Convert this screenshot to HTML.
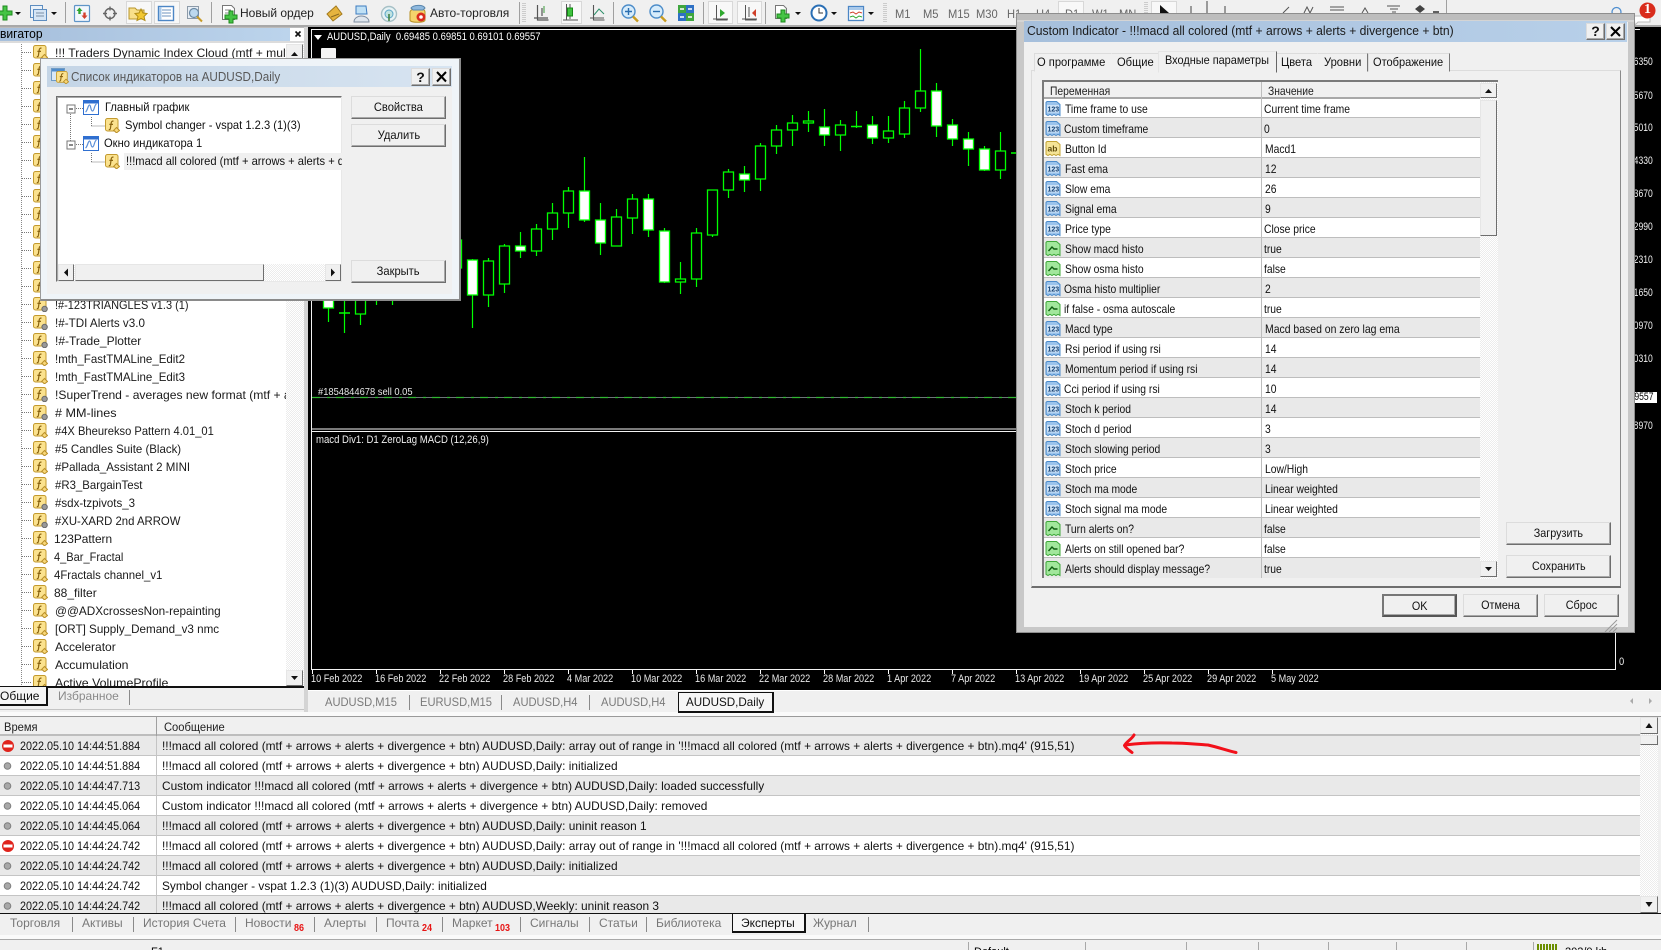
<!DOCTYPE html>
<html lang="ru"><head><meta charset="utf-8"><title>MetaTrader</title>
<style>
html{margin:0;padding:0;width:1661px;height:950px;overflow:hidden}
body{margin:0;padding:0;position:relative;width:1661px;height:950px;overflow:hidden;background:#f0f0f0;font-family:"Liberation Sans","Noto Sans CJK SC",sans-serif;color:#000}
i{position:absolute;font-style:normal;font-size:12px;line-height:14px;white-space:pre;transform-origin:0 0}
.a,svg.a{position:absolute;left:0;top:0}
.r{position:absolute}
.nav i{transform:scaleX(.95);color:#1a1a1a}
.ax i{font-size:11px;color:#f0f0f0;right:8px;transform-origin:100% 0;transform:scaleX(.78)}
.dt i{font-size:11px;color:#e8e8e8;transform:scaleX(.83)}
.ct i{color:#7a7a7a;transform:scaleX(.93)}
.bt i{color:#777}
.lg i{transform:scaleX(.9);color:#111}
.lg i.m{transform:scaleX(.99)}
.tb i{color:#222}
.tf i{color:#666;transform:scaleX(.93)}
.d1 i{transform:scaleX(.93);color:#111}
.d2 i{transform:scaleX(.86);color:#111}
.d2 i.tab{transform:scaleX(.93)}
.btn{position:absolute;box-sizing:border-box;background:#f0f0f0;border:1px solid;border-color:#dcdcdc #6e6e6e #6e6e6e #dcdcdc;box-shadow:inset -1px -1px #a8a8a8;text-align:center;font-size:12px;color:#111;overflow:hidden}
.sb{position:absolute;box-sizing:border-box;background:#f0f0f0;border:1px solid;border-color:#e6e6e6 #6e6e6e #6e6e6e #e6e6e6}
.ha{position:absolute;background:repeating-conic-gradient(#ececec 0 25%,#fff 0 50%) 0 0/2px 2px}
.sep{position:absolute;width:1px;background:#8a8a8a}
</style></head>
<body>
<svg width="0" height="0" style="position:absolute">
<defs>
<symbol id="fy" viewBox="0 0 15 15"><rect x=".5" y=".5" width="12.5" height="12.5" rx="2" fill="#fbe28e" stroke="#c39a2e"/><path d="M8.5 3.2C7 2.8 6.4 3.8 6.2 5L5.4 10.5C5.2 11.5 4.6 11.8 3.8 11.5M4.4 6.4H8" fill="none" stroke="#8a6410" stroke-width="1.2"/><path d="M11.5 9.5l3 3-3 2.4-2.8-2.6z" fill="#f8d778" stroke="#b98f28"/></symbol>
<symbol id="fg" viewBox="0 0 15 15"><rect x=".5" y=".5" width="12.5" height="12.5" rx="2" fill="#fbe28e" stroke="#c39a2e"/><path d="M8.5 3.2C7 2.8 6.4 3.8 6.2 5L5.4 10.5C5.2 11.5 4.6 11.8 3.8 11.5M4.4 6.4H8" fill="none" stroke="#8a6410" stroke-width="1.2"/><circle cx="11.6" cy="12" r="2.7" fill="#9a9a9a" stroke="#6b6b6b"/></symbol>
<symbol id="n" viewBox="0 0 16 17"><path d="M2 1.5h9.500l3.500 3v11l-2-1.200-2 1.200-2-1.200-2 1.200-2-1.200-2 1.200-2-1.200V2.500z" fill="#9cc4ec" stroke="#4d8ccb"/><rect x="2" y="5" width="12" height="7.500" fill="#cfe3f7"/><text x="2.500" y="11.300" font-size="7" font-weight="700" fill="#123f70" font-family="Liberation Sans">123</text></symbol>
<symbol id="ab" viewBox="0 0 16 17"><path d="M2 1.500h9.500l3.500 3v11l-2-1.200-2 1.200-2-1.200-2 1.200-2-1.200-2 1.200-2-1.200V2.500z" fill="#f5e497" stroke="#c3a436"/><text x="2.500" y="11.500" font-size="8.500" font-weight="700" fill="#5e4b0c" font-family="Liberation Sans">ab</text></symbol>
<symbol id="bo" viewBox="0 0 16 17"><path d="M2 1.500h9.500l3.500 3v11l-2-1.200-2 1.200-2-1.200-2 1.200-2-1.200-2 1.200-2-1.200V2.500z" fill="#a2e79c" stroke="#3fa83a"/><path d="M3.500 11l3.500-4 2 2h3.500" fill="none" stroke="#0f5f12" stroke-width="1.400"/></symbol>
<symbol id="ch" viewBox="0 0 16 15"><rect x=".5" y=".5" width="15" height="14" fill="#fff" stroke="#2f6fd0"/><rect x="1" y="1" width="14" height="2.500" fill="#2f6fd0"/><path d="M2.500 12c2-1 2.500-7 4-7s1 6 3 6 1.500-6 4-7" fill="none" stroke="#5b8fd8" stroke-width="1.200"/></symbol>
</defs></svg>

<!-- toolbar -->
<svg class="a" width="1661" height="28" style="top:0">
<rect width="1661" height="25" fill="#f0f0f0"/><rect y="25" width="1661" height="2" fill="#a8a8a8"/>
<path d="M3 6h4v5h5v4H7v5H3v-5H-2v-4h5z" fill="#45c445" stroke="#1d8a1d"/>
<path d="M15 12h6l-3 3zM51 12h6l-3 3zM795 12h6l-3 3zM831 12h6l-3 3zM868 12h6l-3 3z" fill="#111"/>
<rect x="30.500" y="5.500" width="12" height="12" fill="#eaf2fa" stroke="#5d8dc0"/><rect x="33.500" y="9.500" width="13" height="11" fill="#d5e5f5" stroke="#5d8dc0"/><path d="M36 13h8M36 16h8" stroke="#7a8fa5"/>
<g fill="#a0a0a0"><rect x="65" y="2" width="1" height="21"/><rect x="211" y="2" width="1" height="21"/><rect x="519" y="2" width="1" height="22"/><rect x="613" y="2" width="1" height="22"/><rect x="703" y="2" width="1" height="22"/><rect x="765" y="2" width="1" height="22"/><rect x="1446" y="0" width="1" height="13"/></g>
<rect x="74.500" y="5.500" width="15" height="16" rx="1" fill="#f2f7fc" stroke="#5f95c8" stroke-width="1.200"/><path d="M79.500 7.500l3 3.500h-1.800v3h-2.400v-3h-1.800z" fill="#2fa52f"/><path d="M84.500 19l-3-3.500h1.800v-3h2.400v3h1.800z" fill="#d3402c"/>
<circle cx="110" cy="13.500" r="5" fill="none" stroke="#666" stroke-width="1.400"/><path d="M110 6.500v4M110 16.500v4M103 13.500h4M113 13.500h4" stroke="#666" stroke-width="1.400"/>
<rect x="126.500" y="1.500" width="25" height="22" fill="#f8f8f8" stroke="#d8d8d8"/>
<path d="M129 8h6l2 2h7v9h-15z" fill="#f8df8a" stroke="#b8962c"/><path d="M141 9l2 4 4 .5-3 3 1 4-4-2-4 2 1-4-3-3 4-.5z" fill="#f2c832" stroke="#b18c16"/>
<rect x="154.500" y="1.500" width="25" height="22" fill="#f8f8f8" stroke="#d8d8d8"/>
<rect x="158.500" y="6.500" width="15" height="14" fill="#fff" stroke="#4c86c5" stroke-width="1.400"/><path d="M162 10h9M162 13h9M162 16h9" stroke="#6c93bf"/><rect x="159" y="7" width="2.500" height="13" fill="#a9c9ea"/>
<rect x="187.500" y="6.500" width="11" height="12" fill="#e7eef5" stroke="#8c9aa8"/><circle cx="194" cy="13" r="4.500" fill="#bcd8ee" stroke="#6b8aa5" stroke-width="1.200"/><path d="M197 16.500l5 5" stroke="#c79b28" stroke-width="2"/>
<path d="M222.500 5.500h9l3 3v11h-12z" fill="#fff" stroke="#777"/><path d="M225 10h6M225 13h6" stroke="#888"/><path d="M229 14h4v4h4v4h-4v4h-4v-4h-4v-4h4z" transform="translate(0,-3)" fill="#45c445" stroke="#1d8a1d"/>
<path d="M327 14l9-8 6 8-9 7z" fill="#e6b43e" stroke="#a37a1c"/><path d="M331 17l8-3" stroke="#8a6a20"/>
<path d="M356 6h10l1 8h-11z" fill="#bfe0f5" stroke="#3d7cc0"/><path d="M354 22c0-4 4-6 7-6 4 0 8 2 8 6z" fill="#dfe6ee" stroke="#7e8da0"/>
<circle cx="389" cy="14" r="7.500" fill="#e8f3f5" stroke="#a6c0c6" stroke-width="1.400"/><circle cx="389" cy="14" r="4" fill="#bfe2e0" stroke="#5ca6c8"/><path d="M389 14v7" stroke="#3a7d3a" stroke-width="1.500"/>
<path d="M410 12c1-5 15-5 15 0v8c0 3-15 3-15 0z" fill="#f5d36b" stroke="#b78f24"/><path d="M411 8c2-3 12-4 14 0l-2 2h-10z" fill="#8fb9de" stroke="#5a86ad"/><circle cx="421" cy="17" r="4.500" fill="#d92b1e"/><circle cx="421" cy="17" r="1.800" fill="#fff"/>
<path d="M523 3v20M525 3v20" stroke="#a8a8a8" stroke-dasharray="1 1"/>
<path d="M537.500 5v15h11M534 18h14M542 8v8" fill="none" stroke="#555" stroke-width="1.200"/><path d="M544 6v7" stroke="#3a9a3a"/>
<rect x="561.500" y="1.500" width="20" height="22" fill="#f8f8f8" stroke="#d8d8d8"/>
<path d="M566.500 4v16M563 20h15M570 4v4M570 16v3" stroke="#555" fill="none"/><rect x="567.500" y="8" width="5" height="8" fill="#3fc13f" stroke="#158a15"/>
<path d="M593.500 5v15h11M590 18h14" fill="none" stroke="#555" stroke-width="1.100"/><path d="M594 15l5-6 5 5" fill="none" stroke="#2e8f6a"/>
<circle cx="628.500" cy="11.500" r="6.500" fill="#d7ecfb" stroke="#4d8dc9" stroke-width="1.400"/><path d="M625 11.500h7M628.500 8v7" stroke="#2c6fb0" stroke-width="1.400"/><path d="M633 16.500l5 5" stroke="#c99c20" stroke-width="2.400"/>
<circle cx="656.500" cy="11.500" r="6.500" fill="#d7ecfb" stroke="#4d8dc9" stroke-width="1.400"/><path d="M653 11.500h7" stroke="#2c6fb0" stroke-width="1.400"/><path d="M661 16.500l5 5" stroke="#c99c20" stroke-width="2.400"/>
<rect x="678" y="5" width="8" height="8" fill="#3fa63f"/><rect x="686" y="5" width="8" height="8" fill="#2e70c4"/><rect x="678" y="13" width="8" height="8" fill="#2e70c4"/><rect x="686" y="13" width="8" height="8" fill="#3fa63f"/><path d="M680 9h4M688 9h4M680 17h4M688 17h4" stroke="#fff" stroke-width="1.500"/>
<rect x="708.500" y="1.500" width="24" height="22" fill="#f8f8f8" stroke="#d8d8d8"/><rect x="737.500" y="1.500" width="24" height="22" fill="#f8f8f8" stroke="#d8d8d8"/>
<path d="M716.500 5v15h11M713 19h15" stroke="#555" fill="none"/><path d="M720 9l5 4-5 4z" fill="#2ea82e"/>
<path d="M745.500 5v15h11M742 19h15M749 7v10" stroke="#555" fill="none"/><path d="M756 9l-4 4 4 4z" fill="#d0402a"/>
<path d="M775.500 5.500h8l3 3v10h-11z" fill="#fff" stroke="#777"/><path d="M781 11h4v4h4v4h-4v4h-4v-4h-4v-4h4z" transform="translate(0,-1)" fill="#45c445" stroke="#1d8a1d"/>
<circle cx="819" cy="13" r="7.500" fill="#fff" stroke="#2a6fb5" stroke-width="2"/><path d="M819 8v5h4" stroke="#333" fill="none"/>
<rect x="848.500" y="6.500" width="15" height="14" fill="#fff" stroke="#4c86c5" stroke-width="1.300"/><rect x="849" y="7" width="14" height="3" fill="#a9c9ea"/><path d="M850 13l3-1 3 2 3-2 3 1" stroke="#d0402a" fill="none"/><path d="M850 17l3-1 3 2 3-2 3 1" stroke="#2ea82e" fill="none"/>
<path d="M884 3v20M886 3v20" stroke="#a8a8a8" stroke-dasharray="1 1"/>
<rect x="1058.500" y="1.500" width="25" height="22" fill="#f8f8f8" stroke="#d8d8d8"/>
<path d="M1145 2v12M1147 2v12" stroke="#a8a8a8" stroke-dasharray="1 1"/>
<rect x="1151.500" y="1.500" width="25" height="22" fill="#f8f8f8" stroke="#d8d8d8"/>
<path d="M1160 5l9 8h-9z" fill="#111"/>
<path d="M1191 6v7M1207 1v12M1225 6v7" stroke="#444"/>
<path d="M1283 13l6-6M1304 13l3-6 3 6 3-6M1330 7h14M1330 10h14" stroke="#555" fill="none"/>
<path d="M1362 13l3-5 3 5M1387 6h13M1390 9h8M1392 12h4" stroke="#555" fill="none"/>
<path d="M1415 9l5-4 5 4-5 4z" fill="#444"/><path d="M1433 12h6" stroke="#222" stroke-width="1.400"/>
<circle cx="1616.500" cy="12" r="4.500" fill="none" stroke="#4e8ed0" stroke-width="1.300"/>
<path d="M1634 16h16v6h-12l-3 3z" fill="#fff" stroke="#bbb"/>
<circle cx="1647.500" cy="10.500" r="8" fill="#d92c1c"/>
</svg>
<i style="left:1644px;top:3px;color:#fff;font-weight:700;font-family:'Liberation Serif',serif;font-size:14px">1</i>
<div class="tb">
<i style="left:240px;top:6px">Новый ордер</i>
<i style="left:430px;top:6px">Авто-торговля</i>
</div>
<div class="tf">
<i style="left:895px;top:7px">M1</i><i style="left:923px;top:7px">M5</i><i style="left:948px;top:7px">M15</i><i style="left:976px;top:7px">M30</i><i style="left:1007px;top:7px">H1</i><i style="left:1036px;top:7px">H4</i><i style="left:1065px;top:7px">D1</i><i style="left:1092px;top:7px">W1</i><i style="left:1119px;top:7px">MN</i>
</div>

<!-- navigator -->
<div class="r" style="left:0;top:27px;width:304px;height:660px;background:#fff"></div>
<div class="r" style="left:0;top:27px;width:306px;height:1px;background:#bbb"></div>
<div class="r" style="left:0;top:28px;width:290px;height:13px;background:linear-gradient(90deg,#a6bfdc,#bcd4ec)"></div>
<i style="left:0;top:27px;font-size:13px;transform:scaleX(.93)">вигатор</i>
<svg class="a" width="310" height="44" style="top:0;pointer-events:none"><path d="M295.500 31.500l5 5M300.500 31.500l-5 5" stroke="#111" stroke-width="1.600"/></svg>
<div class="r" style="left:0;top:41px;width:304px;height:2px;background:#dcdcdc"></div>
<svg class="a" width="310" height="700">
<defs><pattern id="hd" width="2" height="18" patternUnits="userSpaceOnUse" patternTransform="translate(0,52)"><rect width="1" height="1" fill="#777"/></pattern></defs>
<path d="M21.500 44V687" stroke="#888" stroke-dasharray="1 1"/>
<rect x="22" y="44" width="10" height="643" fill="url(#hd)"/>
<use href="#fy" x="33" y="45" width="15" height="15"/><use href="#fy" x="33" y="63" width="15" height="15"/><use href="#fy" x="33" y="81" width="15" height="15"/><use href="#fy" x="33" y="99" width="15" height="15"/><use href="#fy" x="33" y="117" width="15" height="15"/><use href="#fy" x="33" y="135" width="15" height="15"/><use href="#fy" x="33" y="153" width="15" height="15"/><use href="#fy" x="33" y="171" width="15" height="15"/><use href="#fy" x="33" y="189" width="15" height="15"/><use href="#fy" x="33" y="207" width="15" height="15"/><use href="#fy" x="33" y="225" width="15" height="15"/><use href="#fy" x="33" y="243" width="15" height="15"/><use href="#fy" x="33" y="261" width="15" height="15"/><use href="#fy" x="33" y="279" width="15" height="15"/>
<use href="#fg" x="33" y="297" width="15" height="15"/><use href="#fg" x="33" y="315" width="15" height="15"/><use href="#fg" x="33" y="333" width="15" height="15"/><use href="#fy" x="33" y="351" width="15" height="15"/><use href="#fy" x="33" y="369" width="15" height="15"/><use href="#fg" x="33" y="387" width="15" height="15"/><use href="#fg" x="33" y="405" width="15" height="15"/><use href="#fy" x="33" y="423" width="15" height="15"/><use href="#fy" x="33" y="441" width="15" height="15"/><use href="#fy" x="33" y="459" width="15" height="15"/><use href="#fy" x="33" y="477" width="15" height="15"/><use href="#fg" x="33" y="495" width="15" height="15"/><use href="#fg" x="33" y="513" width="15" height="15"/><use href="#fy" x="33" y="531" width="15" height="15"/><use href="#fy" x="33" y="549" width="15" height="15"/><use href="#fy" x="33" y="567" width="15" height="15"/><use href="#fy" x="33" y="585" width="15" height="15"/><use href="#fy" x="33" y="603" width="15" height="15"/><use href="#fy" x="33" y="621" width="15" height="15"/><use href="#fy" x="33" y="639" width="15" height="15"/><use href="#fy" x="33" y="657" width="15" height="15"/><use href="#fy" x="33" y="675" width="15" height="15"/>
</svg>
<div class="nav">
<i style="left:55px;top:46px;transform:scaleX(1.01)">!!! Traders Dynamic Index Cloud (mtf + multi timeframe)</i>
<i style="left:55px;top:298px;transform:scaleX(.914)">!#-123TRIANGLES v1.3 (1)</i>
<i style="left:55px;top:316px;transform:scaleX(.97)">!#-TDI Alerts v3.0</i>
<i style="left:55px;top:334px;transform:scaleX(1)">!#-Trade_Plotter</i>
<i style="left:55px;top:352px;transform:scaleX(.96)">!mth_FastTMALine_Edit2</i>
<i style="left:55px;top:370px;transform:scaleX(.96)">!mth_FastTMALine_Edit3</i>
<i style="left:55px;top:388px;transform:scaleX(1.01)">!SuperTrend - averages new format (mtf + arrows)</i>
<i style="left:55px;top:406px;transform:scaleX(1.05)"># MM-lines</i>
<i style="left:55px;top:424px;transform:scaleX(.93)">#4X Bheurekso Pattern 4.01_01</i>
<i style="left:55px;top:442px;transform:scaleX(.955)">#5 Candles Suite (Black)</i>
<i style="left:55px;top:460px;transform:scaleX(.96)">#Pallada_Assistant 2 MINI</i>
<i style="left:55px;top:478px">#R3_BargainTest</i>
<i style="left:55px;top:496px;transform:scaleX(.96)">#sdx-tzpivots_3</i>
<i style="left:55px;top:514px;transform:scaleX(.945)">#XU-XARD 2nd ARROW</i>
<i style="left:54px;top:532px;transform:scaleX(.99)">123Pattern</i>
<i style="left:54px;top:550px;transform:scaleX(.92)">4_Bar_Fractal</i>
<i style="left:54px;top:568px">4Fractals channel_v1</i>
<i style="left:54px;top:586px;transform:scaleX(1)">88_filter</i>
<i style="left:55px;top:604px;transform:scaleX(.98)">@@ADXcrossesNon-repainting</i>
<i style="left:55px;top:622px;transform:scaleX(.97)">[ORT] Supply_Demand_v3 nmc</i>
<i style="left:55px;top:640px;transform:scaleX(1)">Accelerator</i>
<i style="left:55px;top:658px;transform:scaleX(1.02)">Accumulation</i>
<i style="left:55px;top:676px;transform:scaleX(1.03)">Active VolumeProfile</i>
</div>
<div class="ha" style="left:286px;top:44px;width:18px;height:643px"></div>
<div class="sb" style="left:286px;top:44px;width:17px;height:16px"></div>
<div class="sb" style="left:286px;top:670px;width:17px;height:16px"></div>
<svg class="a" width="310" height="700"><path d="M291 56l3.500-4 3.500 4zM291 676l3.500 4 3.500-4z" fill="#111"/></svg>

<!-- nav tabs -->
<div class="r" style="left:0;top:687px;width:304px;height:25px;background:#f0f0f0"></div>
<div class="r" style="left:0;top:686px;width:304px;height:1.500px;background:#111"></div>
<div class="r" style="left:0;top:687px;width:46px;height:17px;background:#f6f6f6;border-right:2px solid #111;border-bottom:2px solid #111"></div>
<i style="left:0;top:689px;color:#111">Общие</i>
<i style="left:58px;top:689px;color:#8a8a8a">Избранное</i>
<div class="sep" style="left:129px;top:690px;height:15px"></div>
<div class="r" style="left:0;top:709px;width:308px;height:1px;background:#c4c4c4"></div>

<!-- chart -->
<div class="r" style="left:304px;top:27px;width:4px;height:685px;background:#d4d4d4"></div>
<div class="r" style="left:308px;top:27px;width:1353px;height:663px;background:#000"></div>
<svg class="a" width="1661" height="700" style="top:0">
<path d="M311.500 29.500H1640M311.500 29V669M311 429H1615M311 431.500H1615M311 669.500H1615.500M1615.500 431V670" stroke="#f2f2f2" fill="none"/>
<g stroke="#fff"><path d="M312.500 670v4M376.500 670v4M440.500 670v4M504.500 670v4M568.500 670v4M632.500 670v4M696.500 670v4M760.500 670v4M824.500 670v4M888.500 670v4M952.500 670v4M1016.500 670v4M1080.500 670v4M1144.500 670v4M1208.500 670v4M1272.500 670v4"/></g>
<path d="M314 35h8l-4 5z" fill="#fff"/>
<rect x="321" y="48" width="15" height="11" rx="1" fill="#f4f4f4"/>
<path d="M312 397.500H1615" stroke="#6c7478"/>
<path d="M312 397.500H1615" stroke="#2fb830" stroke-width="1.200" stroke-dasharray="8 7 3 6"/>
<g fill="none" stroke="#0f0" stroke-width="1.200">
<path d="M568.500 187V228M584.500 157V222M600.500 203V255M616.500 209V246M632.500 194V234M648.500 194V237M664.500 228V283M680.500 262V294M696.500 228V287M712.500 190V237M728.500 169V198M744.500 166V192M760.500 143V191M776.500 125V154M792.500 115V146M808.500 111V132M824.500 109V146M840.500 120V151M856.500 111V128M872.500 116V144M888.500 116V143M904.500 101V138M920.500 49V112M936.500 83V137M952.500 119V146M968.500 132V166M984.500 146V171M1000.500 132V179M552.500 203V240M536.500 224V256M520.500 232V258M504.500 244V293M488.500 258V307M472.500 259V328M376.500 290V305M392.500 290V305M360.500 290V325M344.500 290V333M328.500 290V322"/>
</g>
<path fill="#000" stroke="#0f0" stroke-width="1.300" d="M563.500 191h10v22h-10zM611.500 217h10v29h-10zM627.500 199h10v19h-10zM675.500 279h10v3h-10zM691.500 233h10v46h-10zM707.500 190h10v45h-10zM723.500 172h10v18h-10zM755.500 146h10v33h-10zM771.500 130h10v16h-10zM787.500 123h10v7h-10zM803.500 121h10v2h-10zM835.500 125h10v10h-10zM883.500 131h10v7h-10zM899.500 108h10v26h-10zM915.500 91h10v17h-10zM995.500 151h10v19h-10zM547.500 213h10v16h-10zM531.500 229h10v22h-10zM499.500 246h10v38h-10zM483.500 261h10v34h-10zM451.500 240h10v28h-10zM355.500 290h10v24h-10z"/>
<path fill="#fff" stroke="#0f0" stroke-width="1.300" d="M579.500 191h10v29h-10zM595.500 220h10v23h-10zM643.500 199h10v31h-10zM659.500 231h10v51h-10zM739.500 174h10v6h-10zM819.500 127h10v8h-10zM867.500 125h10v13h-10zM931.500 91h10v35h-10zM947.500 125h10v14h-10zM963.500 139h10v10h-10zM979.500 149h10v21h-10zM515.500 246h10v5h-10zM467.500 260h10v35h-10zM323.500 290h10v18h-10z"/>
<path d="M339 313h11M851 126.500h11M1011 153h6" stroke="#0f0" stroke-width="1.600"/>
</svg>
<i style="left:327px;top:30px;font-size:11px;color:#fff;transform:scaleX(.86)">AUDUSD,Daily  0.69485 0.69851 0.69101 0.69557</i>
<i style="left:318px;top:385px;font-size:10.500px;color:#e8e8e8;transform:scaleX(.89)">#1854844678 sell 0.05</i>
<i style="left:316px;top:433px;font-size:11px;color:#f0f0f0;transform:scaleX(.87)">macd Div1: D1 ZeroLag MACD (12,26,9)</i>
<div class="ax">
<i style="top:55px">0.66350</i><i style="top:89px">0.65670</i><i style="top:121px">0.65010</i><i style="top:154px">0.64330</i><i style="top:187px">0.63670</i><i style="top:220px">0.62990</i><i style="top:253px">0.62310</i><i style="top:286px">0.61650</i><i style="top:319px">0.60970</i><i style="top:352px">0.60310</i><i style="top:419px">0.58970</i>
</div>
<div class="r" style="left:1634px;top:392px;width:23px;height:11px;background:#fff"></div>
<i style="right:8px;top:390px;font-size:11px;color:#000;transform-origin:100% 0;transform:scaleX(.78)">9557</i>
<i style="left:1619px;top:655px;font-size:11px;color:#eee;transform:scaleX(.85)">0</i>
<div class="dt">
<i style="left:311px;top:672px">10 Feb 2022</i><i style="left:375px;top:672px">16 Feb 2022</i><i style="left:439px;top:672px">22 Feb 2022</i><i style="left:503px;top:672px">28 Feb 2022</i><i style="left:567px;top:672px">4 Mar 2022</i><i style="left:631px;top:672px">10 Mar 2022</i><i style="left:695px;top:672px">16 Mar 2022</i><i style="left:759px;top:672px">22 Mar 2022</i><i style="left:823px;top:672px">28 Mar 2022</i><i style="left:887px;top:672px">1 Apr 2022</i><i style="left:951px;top:672px">7 Apr 2022</i><i style="left:1015px;top:672px">13 Apr 2022</i><i style="left:1079px;top:672px">19 Apr 2022</i><i style="left:1143px;top:672px">25 Apr 2022</i><i style="left:1207px;top:672px">29 Apr 2022</i><i style="left:1271px;top:672px">5 May 2022</i>
</div>

<!-- chart tabs -->
<div class="r" style="left:308px;top:690px;width:1353px;height:22px;background:#f0f0f0;border-top:1px solid #fff"></div>
<div class="r" style="left:0;top:712px;width:1661px;height:4px;background:#fafafa"></div>
<div class="ct">
<i style="left:325px;top:695px">AUDUSD,M15</i><i style="left:420px;top:695px">EURUSD,M15</i><i style="left:513px;top:695px">AUDUSD,H4</i><i style="left:601px;top:695px">AUDUSD,H4</i>
</div>
<div class="sep" style="left:409px;top:695px;height:15px"></div><div class="sep" style="left:501px;top:695px;height:15px"></div><div class="sep" style="left:589px;top:695px;height:15px"></div>
<div class="r" style="left:678px;top:692px;width:93px;height:18px;background:#f6f6f6;border:1px solid #111;border-right-width:2px;border-bottom-width:2px"></div>
<i style="left:686px;top:695px;color:#111;transform:scaleX(.97)">AUDUSD,Daily</i>
<svg class="a" width="1661" height="720"><path d="M1633 698l-3 3 3 3zM1649 698l3 3-3 3z" fill="#aaa"/></svg>

<!-- log -->
<div class="r" style="left:0;top:716px;width:1661px;height:1px;background:#9a9a9a"></div>
<div class="r" style="left:0;top:717px;width:1640px;height:17px;background:#f0f0f0;border-bottom:2px solid #bdbdbd"></div>
<div class="r" style="left:156px;top:717px;width:1px;height:19px;background:#a0a0a0"></div>
<div class="r" style="left:0;top:736px;width:1640px;height:177px;background:#fff"></div>
<div class="r" style="left:0;top:736px;width:1640px;height:20px;background:#e9e9e9;border-bottom:1px solid #c4c4c4;box-sizing:border-box"></div>
<div class="r" style="left:0;top:756px;width:1640px;height:20px;background:#fff;border-bottom:1px solid #c4c4c4;box-sizing:border-box"></div>
<div class="r" style="left:0;top:776px;width:1640px;height:20px;background:#e9e9e9;border-bottom:1px solid #c4c4c4;box-sizing:border-box"></div>
<div class="r" style="left:0;top:796px;width:1640px;height:20px;background:#fff;border-bottom:1px solid #c4c4c4;box-sizing:border-box"></div>
<div class="r" style="left:0;top:816px;width:1640px;height:20px;background:#e9e9e9;border-bottom:1px solid #c4c4c4;box-sizing:border-box"></div>
<div class="r" style="left:0;top:836px;width:1640px;height:20px;background:#fff;border-bottom:1px solid #c4c4c4;box-sizing:border-box"></div>
<div class="r" style="left:0;top:856px;width:1640px;height:20px;background:#e9e9e9;border-bottom:1px solid #c4c4c4;box-sizing:border-box"></div>
<div class="r" style="left:0;top:876px;width:1640px;height:20px;background:#fff;border-bottom:1px solid #c4c4c4;box-sizing:border-box"></div>
<div class="r" style="left:0;top:896px;width:1640px;height:17px;background:#e9e9e9"></div>
<div class="r" style="left:156px;top:736px;width:1px;height:177px;background:#c4c4c4"></div>
<div class="lg">
<i style="left:4px;top:720px;color:#222;transform:scaleX(.93)">Время</i>
<i style="left:164px;top:720px;color:#222;transform:scaleX(.93)">Сообщение</i>
<i style="left:20px;top:739px">2022.05.10 14:44:51.884</i><i class="m" style="left:162px;top:739px">!!!macd all colored (mtf + arrows + alerts + divergence + btn) AUDUSD,Daily: array out of range in '!!!macd all colored (mtf + arrows + alerts + divergence + btn).mq4' (915,51)</i>
<i style="left:20px;top:759px">2022.05.10 14:44:51.884</i><i class="m" style="left:162px;top:759px">!!!macd all colored (mtf + arrows + alerts + divergence + btn) AUDUSD,Daily: initialized</i>
<i style="left:20px;top:779px">2022.05.10 14:44:47.713</i><i class="m" style="left:162px;top:779px">Custom indicator !!!macd all colored (mtf + arrows + alerts + divergence + btn) AUDUSD,Daily: loaded successfully</i>
<i style="left:20px;top:799px">2022.05.10 14:44:45.064</i><i class="m" style="left:162px;top:799px">Custom indicator !!!macd all colored (mtf + arrows + alerts + divergence + btn) AUDUSD,Daily: removed</i>
<i style="left:20px;top:819px">2022.05.10 14:44:45.064</i><i class="m" style="left:162px;top:819px">!!!macd all colored (mtf + arrows + alerts + divergence + btn) AUDUSD,Daily: uninit reason 1</i>
<i style="left:20px;top:839px">2022.05.10 14:44:24.742</i><i class="m" style="left:162px;top:839px">!!!macd all colored (mtf + arrows + alerts + divergence + btn) AUDUSD,Daily: array out of range in '!!!macd all colored (mtf + arrows + alerts + divergence + btn).mq4' (915,51)</i>
<i style="left:20px;top:859px">2022.05.10 14:44:24.742</i><i class="m" style="left:162px;top:859px">!!!macd all colored (mtf + arrows + alerts + divergence + btn) AUDUSD,Daily: initialized</i>
<i style="left:20px;top:879px">2022.05.10 14:44:24.742</i><i class="m" style="left:162px;top:879px">Symbol changer - vspat 1.2.3 (1)(3) AUDUSD,Daily: initialized</i>
<i style="left:20px;top:899px">2022.05.10 14:44:24.742</i><i class="m" style="left:162px;top:899px">!!!macd all colored (mtf + arrows + alerts + divergence + btn) AUDUSD,Weekly: uninit reason 3</i>
</div>
<svg class="a" width="1661" height="950">
<g fill="#a8a8a8" stroke="#7e7e7e"><circle cx="7.500" cy="766" r="3.300"/><circle cx="7.500" cy="786" r="3.300"/><circle cx="7.500" cy="806" r="3.300"/><circle cx="7.500" cy="826" r="3.300"/><circle cx="7.500" cy="866" r="3.300"/><circle cx="7.500" cy="886" r="3.300"/><circle cx="7.500" cy="906" r="3.300"/></g>
<g><circle cx="8" cy="746" r="6" fill="#e0231c"/><rect x="3.500" y="744.500" width="9" height="3" fill="#fff"/><circle cx="8" cy="846" r="6" fill="#e0231c"/><rect x="3.500" y="844.500" width="9" height="3" fill="#fff"/></g>
<path d="M1134 735c-2 4-8 7-9.500 10.500 1 2.500 5 5 7.500 7M1125 745c15-2 30-2.500 47-2 14 0 25 1.500 36 2 11 2.500 19 5.500 28 7.500" fill="none" stroke="#f2101a" stroke-width="3" stroke-linecap="round" stroke-linejoin="round"/>
</svg>
<div class="ha" style="left:1640px;top:717px;width:18px;height:196px"></div>
<div class="sb" style="left:1640px;top:717px;width:18px;height:17px"></div>
<div class="sb" style="left:1640px;top:735px;width:18px;height:10px"></div>
<div class="sb" style="left:1640px;top:896px;width:18px;height:17px"></div>
<svg class="a" width="1661" height="950"><path d="M1645.500 728l3.500-5 3.500 5zM1645.500 902l3.500 5 3.500-5z" fill="#111"/></svg>

<!-- bottom tabs -->
<div class="r" style="left:0;top:913px;width:1661px;height:22px;background:#f0f0f0;border-top:1.500px solid #111;box-sizing:border-box"></div>
<div class="r" style="left:0;top:935px;width:1661px;height:4px;background:#fafafa"></div>
<div class="r" style="left:0;top:939px;width:1661px;height:1px;background:#a8a8a8"></div>
<div class="bt">
<i style="left:10px;top:916px">Торговля</i><i style="left:82px;top:916px">Активы</i><i style="left:143px;top:916px">История Счета</i><i style="left:245px;top:916px">Новости</i><i style="left:324px;top:916px">Алерты</i><i style="left:386px;top:916px">Почта</i><i style="left:452px;top:916px">Маркет</i><i style="left:530px;top:916px">Сигналы</i><i style="left:599px;top:916px">Статьи</i><i style="left:656px;top:916px">Библиотека</i><i style="left:813px;top:916px">Журнал</i>
<i style="left:294px;top:922px;color:#e81414;font-size:10px;font-weight:700;transform:scaleX(.9)">86</i><i style="left:422px;top:922px;color:#e81414;font-size:10px;font-weight:700;transform:scaleX(.9)">24</i><i style="left:495px;top:922px;color:#e81414;font-size:10px;font-weight:700;transform:scaleX(.9)">103</i>
</div>
<div class="sep" style="left:72px;top:917px;height:15px"></div><div class="sep" style="left:133px;top:917px;height:15px"></div><div class="sep" style="left:235px;top:917px;height:15px"></div><div class="sep" style="left:314px;top:917px;height:15px"></div><div class="sep" style="left:376px;top:917px;height:15px"></div><div class="sep" style="left:442px;top:917px;height:15px"></div><div class="sep" style="left:520px;top:917px;height:15px"></div><div class="sep" style="left:589px;top:917px;height:15px"></div><div class="sep" style="left:646px;top:917px;height:15px"></div><div class="sep" style="left:868px;top:917px;height:15px"></div>
<div class="r" style="left:732px;top:914px;width:71px;height:17px;background:#f6f6f6;border-left:1px solid #111;border-right:2px solid #111;border-bottom:2px solid #111"></div>
<i style="left:741px;top:916px;color:#111">Эксперты</i>
<!-- status bar -->
<div class="sep" style="left:968px;top:942px;height:8px;background:#a8a8a8"></div><div class="sep" style="left:1085px;top:942px;height:8px;background:#a8a8a8"></div><div class="sep" style="left:1186px;top:942px;height:8px;background:#a8a8a8"></div><div class="sep" style="left:1258px;top:942px;height:8px;background:#a8a8a8"></div><div class="sep" style="left:1328px;top:942px;height:8px;background:#a8a8a8"></div><div class="sep" style="left:1396px;top:942px;height:8px;background:#a8a8a8"></div><div class="sep" style="left:1466px;top:942px;height:8px;background:#a8a8a8"></div><div class="sep" style="left:1533px;top:942px;height:8px;background:#a8a8a8"></div>
<i style="left:151px;top:945px;font-size:11px">F1</i><i style="left:974px;top:945px;font-size:11px">Default</i><i style="left:1565px;top:945px;font-size:11px">202/0 kb</i>
<svg class="a" width="1661" height="950"><path d="M1538 944v6M1541 944v6M1544 944v6M1547 944v6M1550 944v6M1553 944v6M1556 944v6" stroke="#6b8e00" stroke-width="2"/></svg>

<!-- dialog 1 -->
<div class="r" style="left:40px;top:58px;width:418px;height:240px;background:#eff4f8;border:1px solid #9a9a9a;border-right:2px solid #8a8a8a;border-bottom:2px solid #8a8a8a"></div>
<div class="r" style="left:47px;top:66px;width:405px;height:21px;background:linear-gradient(90deg,#c4d5e6,#d7e4f1)"></div>
<div class="r" style="left:47px;top:87px;width:405px;height:207px;background:#f0f0f0"></div>
<svg class="a" width="500" height="320">
<rect x="51.500" y="68.500" width="13" height="12" fill="#d9e8f5" stroke="#6f9bc4"/><rect x="52" y="69" width="12" height="2.500" fill="#4f8ccc"/>
<use href="#fy" x="56" y="71" width="13" height="13"/>
</svg>
<i style="left:71px;top:70px;font-size:13px;color:#585858;transform:scaleX(.9)">Список индикаторов на AUDUSD,Daily</i>
<div class="btn" style="left:411px;top:68px;width:19px;height:18px;line-height:16px;font-weight:700;font-size:14px">?</div>
<div class="btn" style="left:432px;top:68px;width:19px;height:18px"></div>
<svg class="a" width="500" height="100"><path d="M437 72l9 9.500M446 72l-9 9.500" stroke="#000" stroke-width="2"/></svg>
<div class="r" style="left:56px;top:96px;width:284px;height:184px;background:#fff;border:1px solid;border-color:#6e6e6e #e8e8e8 #e8e8e8 #6e6e6e;box-shadow:inset 1px 1px #a8a8a8"></div>
<div class="r" style="left:124px;top:153px;width:218px;height:17px;background:#f0f0f0"></div>
<svg class="a" width="500" height="300">
<path d="M70.500 112V141M91 108.500H83M74 108.500h9M74 144.500h9M91.500 117v9M91.500 126h13M91.500 153v9M91.500 162h13" stroke="#777" stroke-dasharray="1 1" fill="none"/>
<rect x="67" y="105" width="8" height="8" fill="#fff" stroke="#777"/><path d="M69 109h4" stroke="#111"/>
<rect x="67" y="141" width="8" height="8" fill="#fff" stroke="#777"/><path d="M69 145h4" stroke="#111"/>
<use href="#ch" x="83" y="100" width="16" height="15"/><use href="#ch" x="83" y="136" width="16" height="15"/>
<use href="#fy" x="105" y="118" width="15" height="15"/><use href="#fy" x="105" y="154" width="15" height="15"/>
</svg>
<div class="d1">
<i style="left:105px;top:100px">Главный график</i>
<i style="left:125px;top:118px">Symbol changer - vspat 1.2.3 (1)(3)</i>
<i style="left:104px;top:136px">Окно индикатора 1</i>
</div>
<div class="r d1" style="left:0;top:0;width:342px;height:300px;overflow:hidden"><i style="left:126px;top:154px">!!!macd all colored (mtf + arrows + alerts + divergence + btn)</i></div>
<div class="ha" style="left:58px;top:264px;width:282px;height:17px"></div>
<div class="sb" style="left:58px;top:264px;width:16px;height:17px"></div>
<div class="sb" style="left:75px;top:264px;width:189px;height:17px"></div>
<div class="sb" style="left:325px;top:264px;width:16px;height:17px"></div>
<svg class="a" width="500" height="300"><path d="M68 268.500l-4 4 4 4zM331 268.500l4 4-4 4z" fill="#111"/></svg>
<div class="btn" style="left:351px;top:96px;width:95px;height:23px;line-height:21px"><span style="display:inline-block;transform:scaleX(.93)">Свойства</span></div>
<div class="btn" style="left:351px;top:124px;width:95px;height:23px;line-height:21px"><span style="display:inline-block;transform:scaleX(.93)">Удалить</span></div>
<div class="btn" style="left:351px;top:260px;width:95px;height:23px;line-height:21px"><span style="display:inline-block;transform:scaleX(.93)">Закрыть</span></div>

<!-- dialog 2 -->
<div class="r" style="left:1016px;top:13px;width:617px;height:618px;background:#f0f0f0;border:1px solid #8e8e8e;box-sizing:content-box;box-shadow:inset 0 6px #bdbdbd,inset 0 8px #d4d4d4,inset 7px 0 #c8c8c8,inset -6px 0 #c8c8c8,inset 0 -5px #c8c8c8"></div>
<div class="r" style="left:1024px;top:21px;width:603px;height:21px;background:linear-gradient(90deg,#a6bfdc,#b8d0e9)"></div>
<i style="left:1027px;top:24px;font-size:13px;color:#1a1a1a;transform:scaleX(.933)">Custom Indicator - !!!macd all colored (mtf + arrows + alerts + divergence + btn)</i>
<div class="btn" style="left:1586px;top:23px;width:19px;height:17px;line-height:15px;font-weight:700;font-size:14px">?</div>
<div class="btn" style="left:1606px;top:23px;width:19px;height:17px"></div>
<svg class="a" width="1661" height="60"><path d="M1611 27l9 9M1620 27l-9 9" stroke="#000" stroke-width="2"/></svg>

<!-- panel -->
<div class="r" style="left:1031px;top:70px;width:590px;height:518px;box-sizing:border-box;background:#f0f0f0;border:1px solid;border-color:#dcdcdc #8a8a8a #6e6e6e #dcdcdc;border-bottom-width:2px"></div>
<div class="r" style="left:1034px;top:53px;width:76px;height:17px;background:#f0f0f0;border:1px solid;border-color:#dcdcdc #777 transparent #dcdcdc"></div>
<div class="r" style="left:1111px;top:53px;width:46px;height:17px;background:#f0f0f0;border:1px solid;border-color:#dcdcdc #777 transparent transparent"></div>
<div class="r" style="left:1276px;top:53px;width:40px;height:17px;background:#f0f0f0;border:1px solid;border-color:#dcdcdc #777 transparent transparent"></div>
<div class="r" style="left:1317px;top:53px;width:49px;height:17px;background:#f0f0f0;border:1px solid;border-color:#dcdcdc #777 transparent transparent"></div>
<div class="r" style="left:1368px;top:53px;width:80px;height:17px;background:#f0f0f0;border:1px solid;border-color:#dcdcdc #777 transparent #dcdcdc"></div>
<div class="r" style="left:1158px;top:51px;width:117px;height:20px;background:#f0f0f0;border:1px solid;border-color:#e4e4e4 #666 transparent #e4e4e4"></div>
<div class="d2">
<i class="tab" style="left:1037px;top:55px">О программе</i>
<i class="tab" style="left:1117px;top:55px">Общие</i>
<i class="tab" style="left:1165px;top:53px;transform:scaleX(.91)">Входные параметры</i>
<i class="tab" style="left:1281px;top:55px">Цвета</i>
<i class="tab" style="left:1324px;top:55px">Уровни</i>
<i class="tab" style="left:1373px;top:55px;transform:scaleX(.92)">Отображение</i>
</div>
<!-- list -->
<div class="r" style="left:1042px;top:80px;width:456px;height:498px;box-sizing:border-box;background:#fff;border-top:2px solid #7a7a7a;border-left:2px solid #7a7a7a"></div>
<div class="r" style="left:1044px;top:82px;width:436px;height:15px;background:#f0f0f0;border-bottom:2px solid #a8a8a8"></div>
<div class="r" style="left:1044px;top:118px;width:436px;height:20px;background:#e9e9e9"></div><div class="r" style="left:1044px;top:158px;width:436px;height:20px;background:#e9e9e9"></div><div class="r" style="left:1044px;top:198px;width:436px;height:20px;background:#e9e9e9"></div><div class="r" style="left:1044px;top:238px;width:436px;height:20px;background:#e9e9e9"></div><div class="r" style="left:1044px;top:278px;width:436px;height:20px;background:#e9e9e9"></div><div class="r" style="left:1044px;top:318px;width:436px;height:20px;background:#e9e9e9"></div><div class="r" style="left:1044px;top:358px;width:436px;height:20px;background:#e9e9e9"></div><div class="r" style="left:1044px;top:398px;width:436px;height:20px;background:#e9e9e9"></div><div class="r" style="left:1044px;top:438px;width:436px;height:20px;background:#e9e9e9"></div><div class="r" style="left:1044px;top:478px;width:436px;height:20px;background:#e9e9e9"></div><div class="r" style="left:1044px;top:518px;width:436px;height:20px;background:#e9e9e9"></div><div class="r" style="left:1044px;top:558px;width:436px;height:20px;background:#e9e9e9"></div>
<svg class="a" width="1661" height="600">
<path d="M1044 118h436M1044 138h436M1044 158h436M1044 178h436M1044 198h436M1044 218h436M1044 238h436M1044 258h436M1044 278h436M1044 298h436M1044 318h436M1044 338h436M1044 358h436M1044 378h436M1044 398h436M1044 418h436M1044 438h436M1044 458h436M1044 478h436M1044 498h436M1044 518h436M1044 538h436M1044 558h436" stroke="#bdbdbd" transform="translate(0,-.5)"/>
<path d="M1261.500 82V578" stroke="#bdbdbd"/>
<use href="#n" x="1045" y="100" width="16" height="17"/><use href="#n" x="1045" y="120" width="16" height="17"/><use href="#ab" x="1045" y="140" width="16" height="17"/><use href="#n" x="1045" y="160" width="16" height="17"/><use href="#n" x="1045" y="180" width="16" height="17"/><use href="#n" x="1045" y="200" width="16" height="17"/><use href="#n" x="1045" y="220" width="16" height="17"/><use href="#bo" x="1045" y="240" width="16" height="17"/><use href="#bo" x="1045" y="260" width="16" height="17"/><use href="#n" x="1045" y="280" width="16" height="17"/><use href="#bo" x="1045" y="300" width="16" height="17"/><use href="#n" x="1045" y="320" width="16" height="17"/><use href="#n" x="1045" y="340" width="16" height="17"/><use href="#n" x="1045" y="360" width="16" height="17"/><use href="#n" x="1045" y="380" width="16" height="17"/><use href="#n" x="1045" y="400" width="16" height="17"/><use href="#n" x="1045" y="420" width="16" height="17"/><use href="#n" x="1045" y="440" width="16" height="17"/><use href="#n" x="1045" y="460" width="16" height="17"/><use href="#n" x="1045" y="480" width="16" height="17"/><use href="#n" x="1045" y="500" width="16" height="17"/><use href="#bo" x="1045" y="520" width="16" height="17"/><use href="#bo" x="1045" y="540" width="16" height="17"/><use href="#bo" x="1045" y="560" width="16" height="17"/>
</svg>
<div class="d2">
<i style="left:1050px;top:84px;color:#222">Переменная</i><i style="left:1268px;top:84px;color:#222">Значение</i>
<i style="left:1065px;top:102px">Time frame to use</i><i style="left:1264px;top:102px">Current time frame</i>
<i style="left:1064px;top:122px">Custom timeframe</i><i style="left:1264px;top:122px">0</i>
<i style="left:1065px;top:142px">Button Id</i><i style="left:1265px;top:142px">Macd1</i>
<i style="left:1065px;top:162px">Fast ema</i><i style="left:1265px;top:162px">12</i>
<i style="left:1065px;top:182px">Slow ema</i><i style="left:1265px;top:182px">26</i>
<i style="left:1065px;top:202px">Signal ema</i><i style="left:1265px;top:202px">9</i>
<i style="left:1065px;top:222px">Price type</i><i style="left:1264px;top:222px">Close price</i>
<i style="left:1065px;top:242px">Show macd histo</i><i style="left:1264px;top:242px">true</i>
<i style="left:1065px;top:262px">Show osma histo</i><i style="left:1264px;top:262px">false</i>
<i style="left:1064px;top:282px">Osma histo multiplier</i><i style="left:1265px;top:282px">2</i>
<i style="left:1064px;top:302px">if false - osma autoscale</i><i style="left:1264px;top:302px">true</i>
<i style="left:1065px;top:322px">Macd type</i><i style="left:1265px;top:322px;transform:scaleX(.87)">Macd based on zero lag ema</i>
<i style="left:1065px;top:342px">Rsi period if using rsi</i><i style="left:1265px;top:342px">14</i>
<i style="left:1065px;top:362px">Momentum period if using rsi</i><i style="left:1265px;top:362px">14</i>
<i style="left:1064px;top:382px">Cci period if using rsi</i><i style="left:1265px;top:382px">10</i>
<i style="left:1065px;top:402px">Stoch k period</i><i style="left:1265px;top:402px">14</i>
<i style="left:1065px;top:422px">Stoch d period</i><i style="left:1265px;top:422px">3</i>
<i style="left:1065px;top:442px">Stoch slowing period</i><i style="left:1265px;top:442px">3</i>
<i style="left:1065px;top:462px">Stoch price</i><i style="left:1265px;top:462px">Low/High</i>
<i style="left:1065px;top:482px">Stoch ma mode</i><i style="left:1265px;top:482px">Linear weighted</i>
<i style="left:1065px;top:502px">Stoch signal ma mode</i><i style="left:1265px;top:502px">Linear weighted</i>
<i style="left:1065px;top:522px">Turn alerts on?</i><i style="left:1264px;top:522px">false</i>
<i style="left:1065px;top:542px">Alerts on still opened bar?</i><i style="left:1264px;top:542px">false</i>
<i style="left:1065px;top:562px">Alerts should display message?</i><i style="left:1264px;top:562px">true</i>
</div>
<div class="ha" style="left:1480px;top:82px;width:18px;height:497px"></div>
<div class="sb" style="left:1480px;top:83px;width:17px;height:15px"></div>
<div class="sb" style="left:1480px;top:100px;width:17px;height:136px"></div>
<div class="sb" style="left:1480px;top:561px;width:17px;height:16px"></div>
<svg class="a" width="1661" height="600"><path d="M1485 93l3.500-4 3.500 4zM1485 567l3.500 4 3.500-4z" fill="#111"/></svg>
<div class="btn" style="left:1506px;top:522px;width:105px;height:23px;line-height:21px"><span style="display:inline-block;transform:scaleX(.9)">Загрузить</span></div>
<div class="btn" style="left:1506px;top:555px;width:105px;height:23px;line-height:21px"><span style="display:inline-block;transform:scaleX(.9)">Сохранить</span></div>
<div class="btn" style="left:1382px;top:594px;width:75px;height:23px;line-height:21px;border:2px solid #555;border-color:#777 #555 #555 #777"><span style="display:inline-block;transform:scaleX(.9)">OK</span></div>
<div class="btn" style="left:1463px;top:594px;width:75px;height:23px;line-height:21px"><span style="display:inline-block;transform:scaleX(.9)">Отмена</span></div>
<div class="btn" style="left:1544px;top:594px;width:75px;height:23px;line-height:21px"><span style="display:inline-block;transform:scaleX(.9)">Сброс</span></div>
<svg class="a" width="1661" height="640"><path d="M1617 624l-8 8M1617 628l-4 4M1617 620l-12 12" stroke="#9a9a9a"/></svg>
</body></html>
